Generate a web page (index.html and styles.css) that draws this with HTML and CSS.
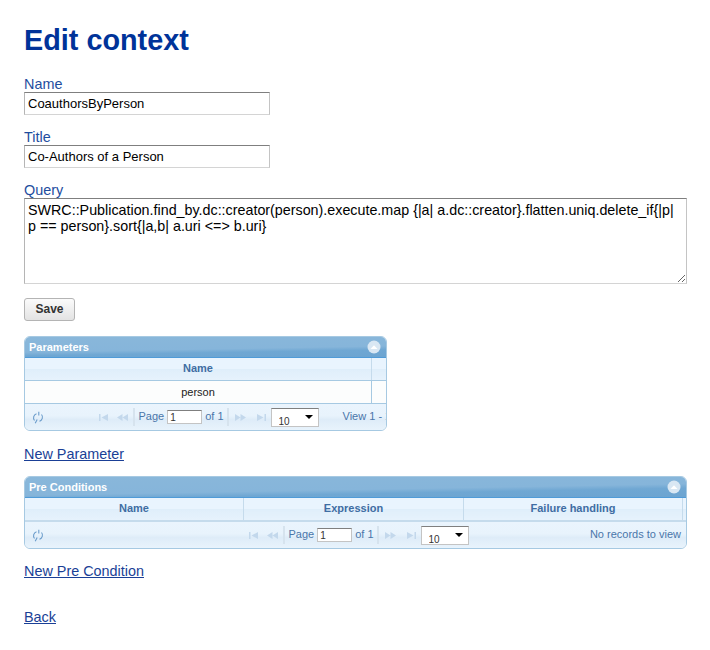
FILE: index.html
```html
<!DOCTYPE html>
<html lang="en">
<head>
    <meta charset="UTF-8">
    <title>Edit context</title>
    <link rel="stylesheet" href="styles.css">
</head>
<body>
    <h1>Edit context</h1>

    <form class="context-form">
        <div class="field">
            <label for="name">Name</label>
            <input id="name" type="text" value="CoauthorsByPerson">
        </div>
        <div class="field">
            <label for="title">Title</label>
            <input id="title" type="text" value="Co-Authors of a Person">
        </div>
        <div class="field">
            <label for="query">Query</label>
            <textarea id="query">SWRC::Publication.find_by.dc::creator(person).execute.map {|a| a.dc::creator}.flatten.uniq.delete_if{|p| p == person}.sort{|a,b| a.uri &lt;=&gt; b.uri}</textarea>
        </div>
        <button type="button" class="save">Save</button>
    </form>

    <!-- Parameters grid -->
    <div class="grid grid-small">
        <div class="caption">
            <span>Parameters</span>
            <svg class="collapse" width="14" height="14" viewBox="0 0 14 14"><circle cx="7" cy="7" r="6.5" fill="#d9e7f3"/><path d="M3.5 9 7 5.2 10.5 9z" fill="#fff"/></svg>
        </div>
        <table class="grid-table">
            <thead>
                <tr><th>Name</th><th class="scroll-col"></th></tr>
            </thead>
            <tbody>
                <tr><td>person</td><td class="scroll-col"></td></tr>
            </tbody>
        </table>
        <div class="pager">
            <div class="pager-left">
                <svg class="refresh" width="12" height="13" viewBox="0 0 12 13"><path d="M2.5 9.5A4.2 4.2 0 0 1 4.5 2.8M9.5 3.5A4.2 4.2 0 0 1 7.5 10.2M6.8 .8 6.8 4.6M3.2 12.2 5.2 8.4" fill="none" stroke="#6b9ccb" stroke-width="1.1"/></svg>
            </div>
            <div class="pager-center">
                <svg class="nav" width="9" height="7" viewBox="0 0 9 7"><path d="M0 0h1.500v7H0zM9 0v7L2.500 3.500z"/></svg>
                <svg class="nav nav-prev" width="11" height="7" viewBox="0 0 11 7"><path d="M5.500 0v7L0 3.500zM11 0v7L5.500 3.500z"/></svg>
                <span class="sep"></span>
                <span class="pager-text">Page</span>
                <input class="page-input" type="text" value="1">
                <span class="pager-text">of 1</span>
                <span class="sep"></span>
                <svg class="nav" width="11" height="7" viewBox="0 0 11 7"><path d="M0 0v7l5.500-3.500zM5.500 0v7l5.500-3.500z"/></svg>
                <svg class="nav nav-last" width="9" height="7" viewBox="0 0 9 7"><path d="M0 0v7l6.500-3.500zM7.500 0H9v7H7.500z"/></svg>
                <div class="page-size">
                    <select><option>10</option></select>
                    <span class="arrow"></span>
                </div>
            </div>
            <div class="pager-right pager-clip">View 1 - 1 of 1</div>
        </div>
    </div>

    <p class="link-row"><a href="#">New Parameter</a></p>

    <!-- Pre conditions grid -->
    <div class="grid">
        <div class="caption">
            <span>Pre Conditions</span>
            <svg class="collapse" width="14" height="14" viewBox="0 0 14 14"><circle cx="7" cy="7" r="6.5" fill="#d9e7f3"/><path d="M3.5 9 7 5.2 10.5 9z" fill="#fff"/></svg>
        </div>
        <table class="grid-table three-cols">
            <thead>
                <tr><th>Name</th><th>Expression</th><th>Failure handling</th><th class="scroll-col"></th></tr>
            </thead>
        </table>
        <div class="pager">
            <div class="pager-left">
                <svg class="refresh" width="12" height="13" viewBox="0 0 12 13"><path d="M2.5 9.5A4.2 4.2 0 0 1 4.5 2.8M9.5 3.5A4.2 4.2 0 0 1 7.5 10.2M6.8 .8 6.8 4.6M3.2 12.2 5.2 8.4" fill="none" stroke="#6b9ccb" stroke-width="1.1"/></svg>
            </div>
            <div class="pager-center">
                <svg class="nav" width="9" height="7" viewBox="0 0 9 7"><path d="M0 0h1.500v7H0zM9 0v7L2.500 3.500z"/></svg>
                <svg class="nav nav-prev" width="11" height="7" viewBox="0 0 11 7"><path d="M5.500 0v7L0 3.500zM11 0v7L5.500 3.500z"/></svg>
                <span class="sep"></span>
                <span class="pager-text">Page</span>
                <input class="page-input" type="text" value="1">
                <span class="pager-text">of 1</span>
                <span class="sep"></span>
                <svg class="nav" width="11" height="7" viewBox="0 0 11 7"><path d="M0 0v7l5.500-3.500zM5.500 0v7l5.500-3.500z"/></svg>
                <svg class="nav nav-last" width="9" height="7" viewBox="0 0 9 7"><path d="M0 0v7l6.500-3.500zM7.500 0H9v7H7.500z"/></svg>
                <div class="page-size">
                    <select><option>10</option></select>
                    <span class="arrow"></span>
                </div>
            </div>
            <div class="pager-right">No records to view</div>
        </div>
    </div>

    <p class="link-row link-row-tight"><a href="#">New Pre Condition</a></p>
    <p class="link-row back-row"><a href="#">Back</a></p>
</body>
</html>
```

FILE: styles.css
```css
body {
    font-family: "Liberation Sans", Arial, sans-serif;
    margin: 0;
    padding: 0 23px 0 24px;
    background-color: #ffffff;
    color: #000;
}
h1 {
    margin: 0;
    padding-top: 23px;
    height: 54px;
    line-height: 34px;
    font-size: 28.800px;
    color: #003399;
    box-sizing: border-box;
}
.context-form {
    padding-top: 22px;
}
.field {
    margin-bottom: 14px;
}
.field label {
    display: block;
    height: 16px;
    line-height: 16px;
    font-size: 14.400px;
    color: #1e4d9e;
}
.field input,
.field textarea {
    display: block;
    box-sizing: border-box;
    margin: 0;
    padding: 0 3px;
    border: 1px solid #d4d4d4;
    border-top-color: #7f7f7f;
    border-left-color: #b5b5b5;
    border-right-color: #c4c4c4;
    font-family: "Liberation Sans", Arial, sans-serif;
    font-size: 13px;
    color: #000;
}
.field input {
    width: 246px;
    height: 23px;
}
.field textarea {
    width: 663px;
    height: 86px;
    padding-top: 3px;
    line-height: 16px;
    font-size: 14.300px;
    resize: both;
}
.save {
    display: block;
    width: 51px;
    height: 23px;
    padding: 0 0 2px;
    border: 1px solid #b4b4b4;
    border-radius: 3px;
    background: linear-gradient(#fbfbfb, #e3e3e3);
    font-family: "Liberation Sans", Arial, sans-serif;
    font-size: 12px;
    font-weight: bold;
    color: #333;
}
.grid {
    border: 1px solid #a6c9e2;
    border-radius: 6px;
    overflow: hidden;
    background-color: #fcfdfd;
}
.grid-small {
    width: 361px;
    margin-top: 15px;
}
.caption {
    display: flex;
    justify-content: space-between;
    align-items: center;
    height: 21px;
    padding: 0 4px;
    box-sizing: border-box;
    background: linear-gradient(179deg, #89b7da 0, #86b5da 58%, #6fa7d3 72%, #6ca4d1 100%);
    border-bottom: 1px solid #4f9bd8;
    font-size: 11px;
    font-weight: bold;
    color: #ffffff;
}
.collapse {
    margin-right: 1px;
}
.grid-table {
    width: 100%;
    border-collapse: collapse;
    table-layout: fixed;
    font-size: 11px;
}
.grid-table th {
    height: 19px;
    padding: 0 0 3px;
    border-right: 1px solid #c5dbec;
    border-bottom: 1px solid #a6c9e2;
    background: linear-gradient(#e9f4fe 0, #e9f4fe 50%, #dfeefa 50%, #e6f2fc 100%);
    font-weight: bold;
    color: #3f6da3;
}
.grid-table td {
    height: 22px;
    padding: 0;
    border-right: 1px solid #a6c9e2;
    border-bottom: 1px solid #a6c9e2;
    text-align: center;
    color: #222;
}
.grid-table .scroll-col {
    width: 14px;
    border-right: 0;
}
.grid-table td.scroll-col {
    background-color: #fcfdfd;
}
.three-cols .scroll-col {
    width: 3px;
}
.three-cols th {
    border-bottom: 2px solid #c5dbec;
}
.three-cols th:nth-child(1) {
    width: 218px;
}
.three-cols th:nth-child(2) {
    width: 219px;
}
.pager {
    display: grid;
    grid-template-columns: 1fr auto 1fr;
    align-items: center;
    height: 26px;
    background: linear-gradient(#eaf4fd 0, #e8f3fc 45%, #deecf8 60%, #e8f3fc 100%);
    font-size: 11px;
    color: #4a76aa;
}
.pager-left {
    display: flex;
    padding-left: 7px;
}
.pager-center {
    display: flex;
    align-items: center;
    gap: 3px;
    padding-left: 4px;
    white-space: nowrap;
}
.pager-center .nav {
    fill: #c3d8ec;
    margin: 0 3px;
}
.pager-center .nav-prev {
    margin-right: 2px;
}
.pager-center .nav-last {
    margin: 0 2px 0 5px;
}
.pager-text {
    padding-bottom: 2px;
}
.sep {
    width: 2px;
    height: 18px;
    background-color: #d6e3ee;
}
.page-input {
    box-sizing: border-box;
    width: 35px;
    height: 14px;
    padding: 0 2px;
    margin: 0;
    border: 1px solid #c4c4c4;
    border-top-color: #7f7f7f;
    font-family: "Liberation Sans", Arial, sans-serif;
    font-size: 10px;
    color: #333;
}
.page-size {
    position: relative;
}
.page-size select {
    display: block;
    box-sizing: border-box;
    width: 48px;
    height: 19px;
    padding: 7px 0 0 7px;
    border: 1px solid #c4c4c4;
    border-top-color: #7f7f7f;
    border-radius: 0;
    appearance: none;
    background-color: #fff;
    font-family: "Liberation Sans", Arial, sans-serif;
    font-size: 10px;
    color: #333;
}
.arrow {
    position: absolute;
    right: 6px;
    top: 7px;
    border-left: 4px solid transparent;
    border-right: 4px solid transparent;
    border-top: 4px solid #000;
}
.pager-right {
    min-width: 0;
    overflow: hidden;
    white-space: nowrap;
    text-align: right;
    padding: 0 5px 2px 0;
}
.pager-clip {
    text-align: left;
    padding: 0 0 2px 24px;
}
.link-row {
    margin: 15px 0 14px;
    height: 16px;
    line-height: 16px;
    font-size: 14.400px;
}
.link-row a {
    color: #1a3f96;
}
.link-row-tight {
    margin-top: 14px;
}
.back-row {
    margin-top: 30px;
}
```
